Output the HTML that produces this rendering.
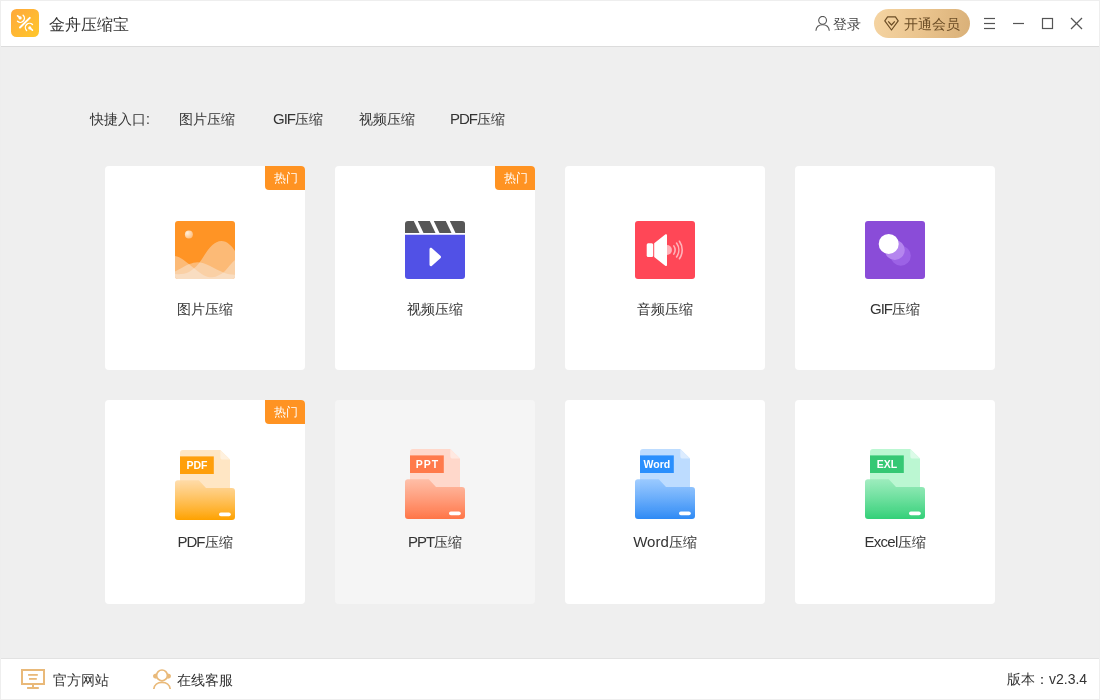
<!DOCTYPE html>
<html><head><meta charset="utf-8">
<style>
*{margin:0;padding:0;box-sizing:border-box}
html,body{width:1100px;height:700px;overflow:hidden;background:#eeeeee;font-family:"Liberation Sans",sans-serif;color:#333}
.abs{position:absolute}
#hdr{position:absolute;left:1px;top:1px;width:1098px;height:45px;background:#fff}
#hline{position:absolute;left:1px;top:46px;width:1098px;height:1px;background:#dcdcdc}
#main{position:absolute;left:1px;top:47px;width:1098px;height:611px;background:#efefef}
#fline{position:absolute;left:1px;top:658px;width:1098px;height:1px;background:#e2e2e2}
#ftr{position:absolute;left:1px;top:659px;width:1098px;height:40px;background:#fff}
.t{position:absolute;white-space:nowrap;line-height:20px;font-size:14px;will-change:transform}
.card{position:absolute;width:200px;height:204px;background:#fff;border-radius:4px}
.l{font-size:15px;letter-spacing:-1px}
.card.hov{background:#f5f5f5}
.badge{will-change:transform;position:absolute;right:0;top:0;width:40px;height:24px;background:#ff9322;border-radius:0 4px 0 4px;color:#fff;font-size:12px;line-height:24px;text-align:center;padding-left:2px}
.ic{position:absolute;left:70px;top:55px}
.ic2{position:absolute;left:70px;top:50px;will-change:transform}
.up{top:49px}
.lbl{will-change:transform;position:absolute;left:0;width:200px;text-align:center;font-size:14px;line-height:20px;color:#333;top:133px}
.lbl2{top:132px}
</style></head><body>
<div id="hdr"></div><div id="hline"></div><div id="main"></div><div id="fline"></div><div id="ftr"></div>

<!-- header -->
<svg class="abs" style="left:11px;top:9px" width="28" height="28" viewBox="0 0 28 28">
<defs><linearGradient id="lg" x1="0" y1="0" x2="1" y2="1"><stop offset="0" stop-color="#ffa83c"/><stop offset="1" stop-color="#ffc72a"/></linearGradient></defs>
<rect width="28" height="28" rx="5.5" fill="url(#lg)"/>
<g stroke="#fff" stroke-width="2" stroke-linecap="round" fill="none">
<line x1="9" y1="18.5" x2="18.8" y2="8.9"/>
<line x1="6.6" y1="6.9" x2="9.1" y2="8.9" stroke-width="1.7"/>
<path d="M12.1 6.3 A3.9 3.9 0 0 1 6.5 12.3" stroke-width="1.4"/>
<line x1="21.4" y1="21.1" x2="18.8" y2="18.9" stroke-width="1.7"/>
<path d="M15.6 21.5 A3.9 3.9 0 0 1 21.5 15.6" stroke-width="1.4"/>
</g>
<circle cx="9.1" cy="8.9" r="1.6" fill="#fff"/>
<circle cx="18.8" cy="18.9" r="1.6" fill="#fff"/>
</svg>
<div class="t" style="left:49px;top:15px;font-size:16px;line-height:20px;color:#333">金舟压缩宝</div>

<svg class="abs" style="left:815px;top:16px" width="15" height="15" viewBox="0 0 15 15">
<g stroke="#555" stroke-width="1.1" fill="none"><circle cx="7.6" cy="4.3" r="3.9"/><path d="M0.9 14.8 C1.3 10.9 4.1 8.8 7.6 8.8 C11.1 8.8 13.9 10.9 14.3 14.8"/></g>
</svg>
<div class="t" style="left:833px;top:14px;color:#444">登录</div>

<div class="abs" style="left:874px;top:9px;width:96px;height:29px;border-radius:15px;background:linear-gradient(100deg,#f5d4a2 0%,#eac48e 50%,#d9b078 100%)"></div>
<svg class="abs" style="left:884px;top:16px" width="15" height="15" viewBox="0 0 15 15">
<g stroke="#6b4d26" stroke-width="1.2" fill="none" stroke-linejoin="round"><path d="M3.6 0.8 H11.4 L14.2 4.9 L7.5 14 L0.8 4.9 Z"/><path d="M4.2 5.4 L7.5 9 L10.8 5.4"/></g>
</svg>
<div class="t" style="left:904px;top:14px;color:#6b4d26">开通会员</div>

<svg class="abs" style="left:984px;top:17px" width="100" height="13" viewBox="0 0 100 13">
<g stroke="#555" stroke-width="1.2" fill="none">
<line x1="0" y1="1.5" x2="11" y2="1.5"/><line x1="0" y1="6.5" x2="11" y2="6.5"/><line x1="0" y1="11.5" x2="11" y2="11.5"/>
<line x1="29" y1="6.5" x2="40" y2="6.5"/>
<rect x="58.5" y="1.5" width="10" height="10"/>
<line x1="87" y1="1" x2="98" y2="12"/><line x1="98" y1="1" x2="87" y2="12"/>
</g>
</svg>

<!-- quick entry -->
<div class="t" style="left:90px;top:109px;color:#333">快捷入口:</div>
<div class="t" style="left:179px;top:109px;color:#333">图片压缩</div>
<div class="t" style="left:273px;top:109px;color:#333"><span class="l">GIF</span>压缩</div>
<div class="t" style="left:359px;top:109px;color:#333">视频压缩</div>
<div class="t" style="left:450px;top:109px;color:#333"><span class="l">PDF</span>压缩</div>

<!-- row 1 -->
<div class="card" style="left:105px;top:166px">
<div class="badge">热门</div>
<svg class="ic" width="60" height="58" viewBox="0 0 60 58">
<defs><clipPath id="c1"><rect width="60" height="58" rx="3"/></clipPath>
<radialGradient id="sun" cx="0.3" cy="0.3" r="0.8"><stop offset="0" stop-color="#fff1de"/><stop offset="1" stop-color="#ffbb78"/></radialGradient></defs>
<g clip-path="url(#c1)">
<rect width="60" height="58" fill="#ff9425"/>
<circle cx="13.9" cy="13.6" r="4" fill="url(#sun)"/>
<g fill="#f8efe6" fill-opacity="0.42">
<path d="M-2 35 C4 34 10 40 20 48 C26 53 31 56.5 37 56.3 C42 56 46 53 49 51 C53 47 57 41 60 38.9 V58 H-2 Z"/>
<path d="M0 53 C5 53.5 10 53 14 51 C19 48 23 44 27 38 C33 28 39 20 46.4 20 C52 20 57 25 60 30 V58 H0 Z"/>
<path d="M0 50.5 C5 48 10 45 14.3 43.1 C17 42 20 41.2 22.6 41.2 C30 41.2 40 48 48.3 51.5 C52 53 56 53.7 60 53.7 V58 H0 Z"/>
</g>
</g>
</svg>
<div class="lbl">图片压缩</div>
</div>

<div class="card" style="left:335px;top:166px">
<div class="badge">热门</div>
<svg class="ic" width="60" height="58" viewBox="0 0 60 58">
<defs><clipPath id="c2"><path d="M0 3 A3 3 0 0 1 3 0 H57 A3 3 0 0 1 60 3 V12 H0 Z"/></clipPath></defs>
<g clip-path="url(#c2)"><rect width="60" height="12" fill="#575757"/>
<g fill="#fff"><path d="M8.8 0 H12.8 L18.5 12 H14.5 Z"/><path d="M24.8 0 H28.8 L34.5 12 H30.5 Z"/><path d="M40.8 0 H44.8 L50.5 12 H46.5 Z"/></g></g>
<path d="M0 13.8 H60 V55 A3 3 0 0 1 57 58 H3 A3 3 0 0 1 0 55 Z" fill="#5151e6"/>
<path d="M24.5 28.2 C24.5 27 25.8 26.4 26.7 27.1 L35.4 34.8 C36.2 35.5 36.2 36.5 35.4 37.2 L26.7 44.9 C25.8 45.6 24.5 45 24.5 43.8 Z" fill="#fff"/>
</svg>
<div class="lbl">视频压缩</div>
</div>

<div class="card" style="left:565px;top:166px">
<svg class="ic" width="60" height="58" viewBox="0 0 60 58">
<rect width="60" height="58" rx="3" fill="#ff4757"/>
<rect x="11.7" y="22.3" width="6.5" height="13.7" rx="1.5" fill="#fff"/>
<path d="M19.2 22.3 L30.2 13.5 C31.2 12.7 32 13.3 32 14.3 V43.9 C32 44.9 31.2 45.5 30.2 44.7 L19.2 36 Z" fill="#fff"/>
<path d="M32 24.1 A4.9 4.9 0 0 1 32 33.9 Z" fill="#ffb3ba"/>
<g stroke="#ffb3ba" stroke-width="1.6" fill="none" stroke-linecap="round">
<path d="M38.8 24.9 A7.5 7.5 0 0 1 38.8 33.1"/>
<path d="M41.55 22.06 A11.8 11.8 0 0 1 41.55 35.94"/>
<path d="M44.45 20.28 A15.2 15.2 0 0 1 44.45 37.72"/>
</g>
</svg>
<div class="lbl">音频压缩</div>
</div>

<div class="card" style="left:795px;top:166px">
<svg class="ic" width="60" height="58" viewBox="0 0 60 58">
<rect width="60" height="58" rx="3" fill="#8a4cd8"/>
<circle cx="35.8" cy="34.8" r="10" fill="#9c62e6"/>
<circle cx="29.8" cy="29" r="10" fill="#b586ef"/>
<circle cx="23.7" cy="22.9" r="10" fill="#fff"/>
</svg>
<div class="lbl"><span class="l">GIF</span>压缩</div>
</div>

<!-- row 2 -->
<div class="card" style="left:105px;top:400px">
<div class="badge">热门</div>
<svg class="ic2" width="60" height="70" viewBox="0 0 60 70">
<defs><linearGradient id="fp" x1="0" y1="0" x2="0" y2="1"><stop offset="0" stop-color="#ffd9a3" stop-opacity="0.85"/><stop offset="1" stop-color="#ffa200"/></linearGradient></defs>
<path d="M5 3 A3 3 0 0 1 8 0 H45.3 L55 9.6 V60 H5 Z" fill="#ffe6c4"/>
<path d="M45.3 0 V7 A2.6 2.6 0 0 0 47.9 9.6 H55 Z" fill="#fff1de"/>
<rect x="5" y="6.4" width="33.8" height="17.6" fill="#ff9f0b"/>
<text x="21.9" y="19.3" font-family="Liberation Sans" font-weight="bold" font-size="10.5" fill="#fff" text-anchor="middle">PDF</text>
<path d="M0 33 A3 3 0 0 1 3 30.2 H23.8 L31 38 H57 A3 3 0 0 1 60 41 V67 A3 3 0 0 1 57 70 H3 A3 3 0 0 1 0 67 Z" fill="url(#fp)"/>
<rect x="44" y="62.4" width="11.8" height="3.8" rx="1.9" fill="#fff"/>
</svg>
<div class="lbl lbl2"><span class="l">PDF</span>压缩</div>
</div>

<div class="card hov" style="left:335px;top:400px">
<svg class="ic2 up" width="60" height="70" viewBox="0 0 60 70">
<defs><linearGradient id="fpp" x1="0" y1="0" x2="0" y2="1"><stop offset="0" stop-color="#ffb9a0" stop-opacity="0.85"/><stop offset="1" stop-color="#ff7547"/></linearGradient></defs>
<path d="M5 3 A3 3 0 0 1 8 0 H45.3 L55 9.6 V60 H5 Z" fill="#ffd8cb"/>
<path d="M45.3 0 V7 A2.6 2.6 0 0 0 47.9 9.6 H55 Z" fill="#ffe9e1"/>
<rect x="5" y="6.4" width="33.8" height="17.6" fill="#ff7a4b"/>
<text x="22.5" y="19.3" font-family="Liberation Sans" font-weight="bold" font-size="10.5" fill="#fff" text-anchor="middle" letter-spacing="1">PPT</text>
<path d="M0 33 A3 3 0 0 1 3 30.2 H23.8 L31 38 H57 A3 3 0 0 1 60 41 V67 A3 3 0 0 1 57 70 H3 A3 3 0 0 1 0 67 Z" fill="url(#fpp)"/>
<rect x="44" y="62.4" width="11.8" height="3.8" rx="1.9" fill="#fff"/>
</svg>
<div class="lbl lbl2"><span class="l">PPT</span>压缩</div>
</div>

<div class="card" style="left:565px;top:400px">
<svg class="ic2 up" width="60" height="70" viewBox="0 0 60 70">
<defs><linearGradient id="fw" x1="0" y1="0" x2="0" y2="1"><stop offset="0" stop-color="#94c6ff" stop-opacity="0.85"/><stop offset="1" stop-color="#2e8af5"/></linearGradient></defs>
<path d="M5 3 A3 3 0 0 1 8 0 H45.3 L55 9.6 V60 H5 Z" fill="#bddcff"/>
<path d="M45.3 0 V7 A2.6 2.6 0 0 0 47.9 9.6 H55 Z" fill="#dcecff"/>
<rect x="5" y="6.4" width="33.8" height="17.6" fill="#2a8ffd"/>
<text x="21.9" y="19.3" font-family="Liberation Sans" font-weight="bold" font-size="10.5" fill="#fff" text-anchor="middle">Word</text>
<path d="M0 33 A3 3 0 0 1 3 30.2 H23.8 L31 38 H57 A3 3 0 0 1 60 41 V67 A3 3 0 0 1 57 70 H3 A3 3 0 0 1 0 67 Z" fill="url(#fw)"/>
<rect x="44" y="62.4" width="11.8" height="3.8" rx="1.9" fill="#fff"/>
</svg>
<div class="lbl lbl2"><span style="font-size:15px">Word</span>压缩</div>
</div>

<div class="card" style="left:795px;top:400px">
<svg class="ic2 up" width="60" height="70" viewBox="0 0 60 70">
<defs><linearGradient id="fe" x1="0" y1="0" x2="0" y2="1"><stop offset="0" stop-color="#97eab9" stop-opacity="0.85"/><stop offset="1" stop-color="#33d078"/></linearGradient></defs>
<path d="M5 3 A3 3 0 0 1 8 0 H45.3 L55 9.6 V60 H5 Z" fill="#bbf7d2"/>
<path d="M45.3 0 V7 A2.6 2.6 0 0 0 47.9 9.6 H55 Z" fill="#dcfbe8"/>
<rect x="5" y="6.4" width="33.8" height="17.6" fill="#35c874"/>
<text x="21.9" y="19.3" font-family="Liberation Sans" font-weight="bold" font-size="10.5" fill="#fff" text-anchor="middle">EXL</text>
<path d="M0 33 A3 3 0 0 1 3 30.2 H23.8 L31 38 H57 A3 3 0 0 1 60 41 V67 A3 3 0 0 1 57 70 H3 A3 3 0 0 1 0 67 Z" fill="url(#fe)"/>
<rect x="44" y="62.4" width="11.8" height="3.8" rx="1.9" fill="#fff"/>
</svg>
<div class="lbl lbl2"><span style="font-size:15px;letter-spacing:-0.7px">Excel</span>压缩</div>
</div>

<!-- footer -->
<svg class="abs" style="left:21px;top:669px" width="24" height="20" viewBox="0 0 24 20">
<g fill="#e9b979"><path d="M0 0 H24 V16 H0 Z M2 2 V14 H22 V2 Z" fill-rule="evenodd"/>
<rect x="7.1" y="5" width="9.7" height="1.8"/><rect x="8" y="9" width="7.8" height="1.8"/>
<rect x="11" y="16" width="2" height="2"/><rect x="6.1" y="18" width="11.7" height="2"/></g>
</svg>
<div class="t" style="left:53px;top:670px;color:#333">官方网站</div>
<svg class="abs" style="left:152px;top:668px" width="20" height="22" viewBox="0 0 20 22">
<g stroke="#e9b979" stroke-width="1.7" fill="none"><circle cx="10" cy="7.4" r="5.4"/><path d="M1.8 21 C2.2 16.9 5.6 14.3 10 14.3 C14.4 14.3 17.8 16.9 18.2 21"/></g>
<path d="M4.6 5.4 A3.3 2.5 0 0 0 4.6 10.8 Z" fill="#e9b979"/><path d="M15.4 5.4 A3.3 2.5 0 0 1 15.4 10.8 Z" fill="#e9b979"/>
</svg>
<div class="t" style="left:177px;top:670px;color:#333">在线客服</div>
<div class="t" style="left:1007px;top:669px;color:#333">版本：v2.3.4</div>
</body></html>
